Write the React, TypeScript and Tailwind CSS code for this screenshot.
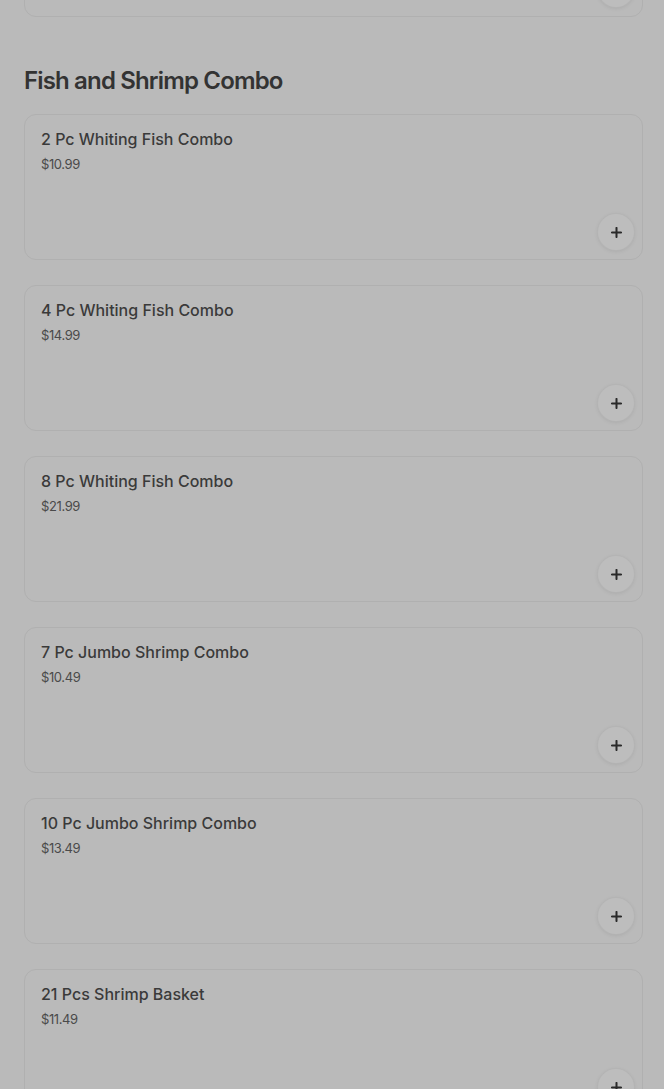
const ITEMS = [
  { name: "2 Pc Whiting Fish Combo", price: "$10.99" },
  { name: "4 Pc Whiting Fish Combo", price: "$14.99" },
  { name: "8 Pc Whiting Fish Combo", price: "$21.99" },
  { name: "7 Pc Jumbo Shrimp Combo", price: "$10.49" },
  { name: "10 Pc Jumbo Shrimp Combo", price: "$13.49" },
  { name: "21 Pcs Shrimp Basket", price: "$11.49" },
];

function PlusButton() {
  return (
    <button className="flex h-9 w-9 items-center justify-center rounded-full bg-[#bdbdbd] text-[#2a2a2a] shadow-[0_1px_4px_rgba(0,0,0,0.1)] ring-1 ring-[#b4b4b4]">
      <svg width="11" height="11" viewBox="0 0 12 12" fill="none">
        <path d="M6 1v10M1 6h10" stroke="currentColor" strokeWidth="2.2" strokeLinecap="round" />
      </svg>
    </button>
  );
}

function ItemCard({ name, price }: { name?: string; price?: string }) {
  return (
    <div className="flex h-[146px] flex-col rounded-xl border border-[#b0b0b0] bg-[#bababa] pb-[9px] pl-4 pr-[8px] pt-[14px]">
      {name && <p className="text-[16px] font-medium leading-5 text-[#3a3a3a]">{name}</p>}
      {price && <p className="mt-[7px] text-[13px] leading-4 tracking-[-0.03em] text-[#4a4a4a]">{price}</p>}
      <div className="mt-auto self-end">
        <PlusButton />
      </div>
    </div>
  );
}

export default function App() {
  return (
    <div
      className="min-h-[1089px] overflow-hidden bg-[#bababa] pl-6 pr-[21px]"
      style={{ fontFamily: "Inter, 'Noto Sans', sans-serif" }}
    >
      <div className="-mt-[129px]">
        <ItemCard />
      </div>
      <h2 className="mt-[48px] text-[24px] font-semibold leading-8 tracking-[-0.035em] text-[#333333]">
        Fish and Shrimp Combo
      </h2>
      <div className="mt-[17px] flex flex-col gap-[25px]">
        {ITEMS.map((it) => (
          <ItemCard key={it.name} name={it.name} price={it.price} />
        ))}
      </div>
    </div>
  );
}
